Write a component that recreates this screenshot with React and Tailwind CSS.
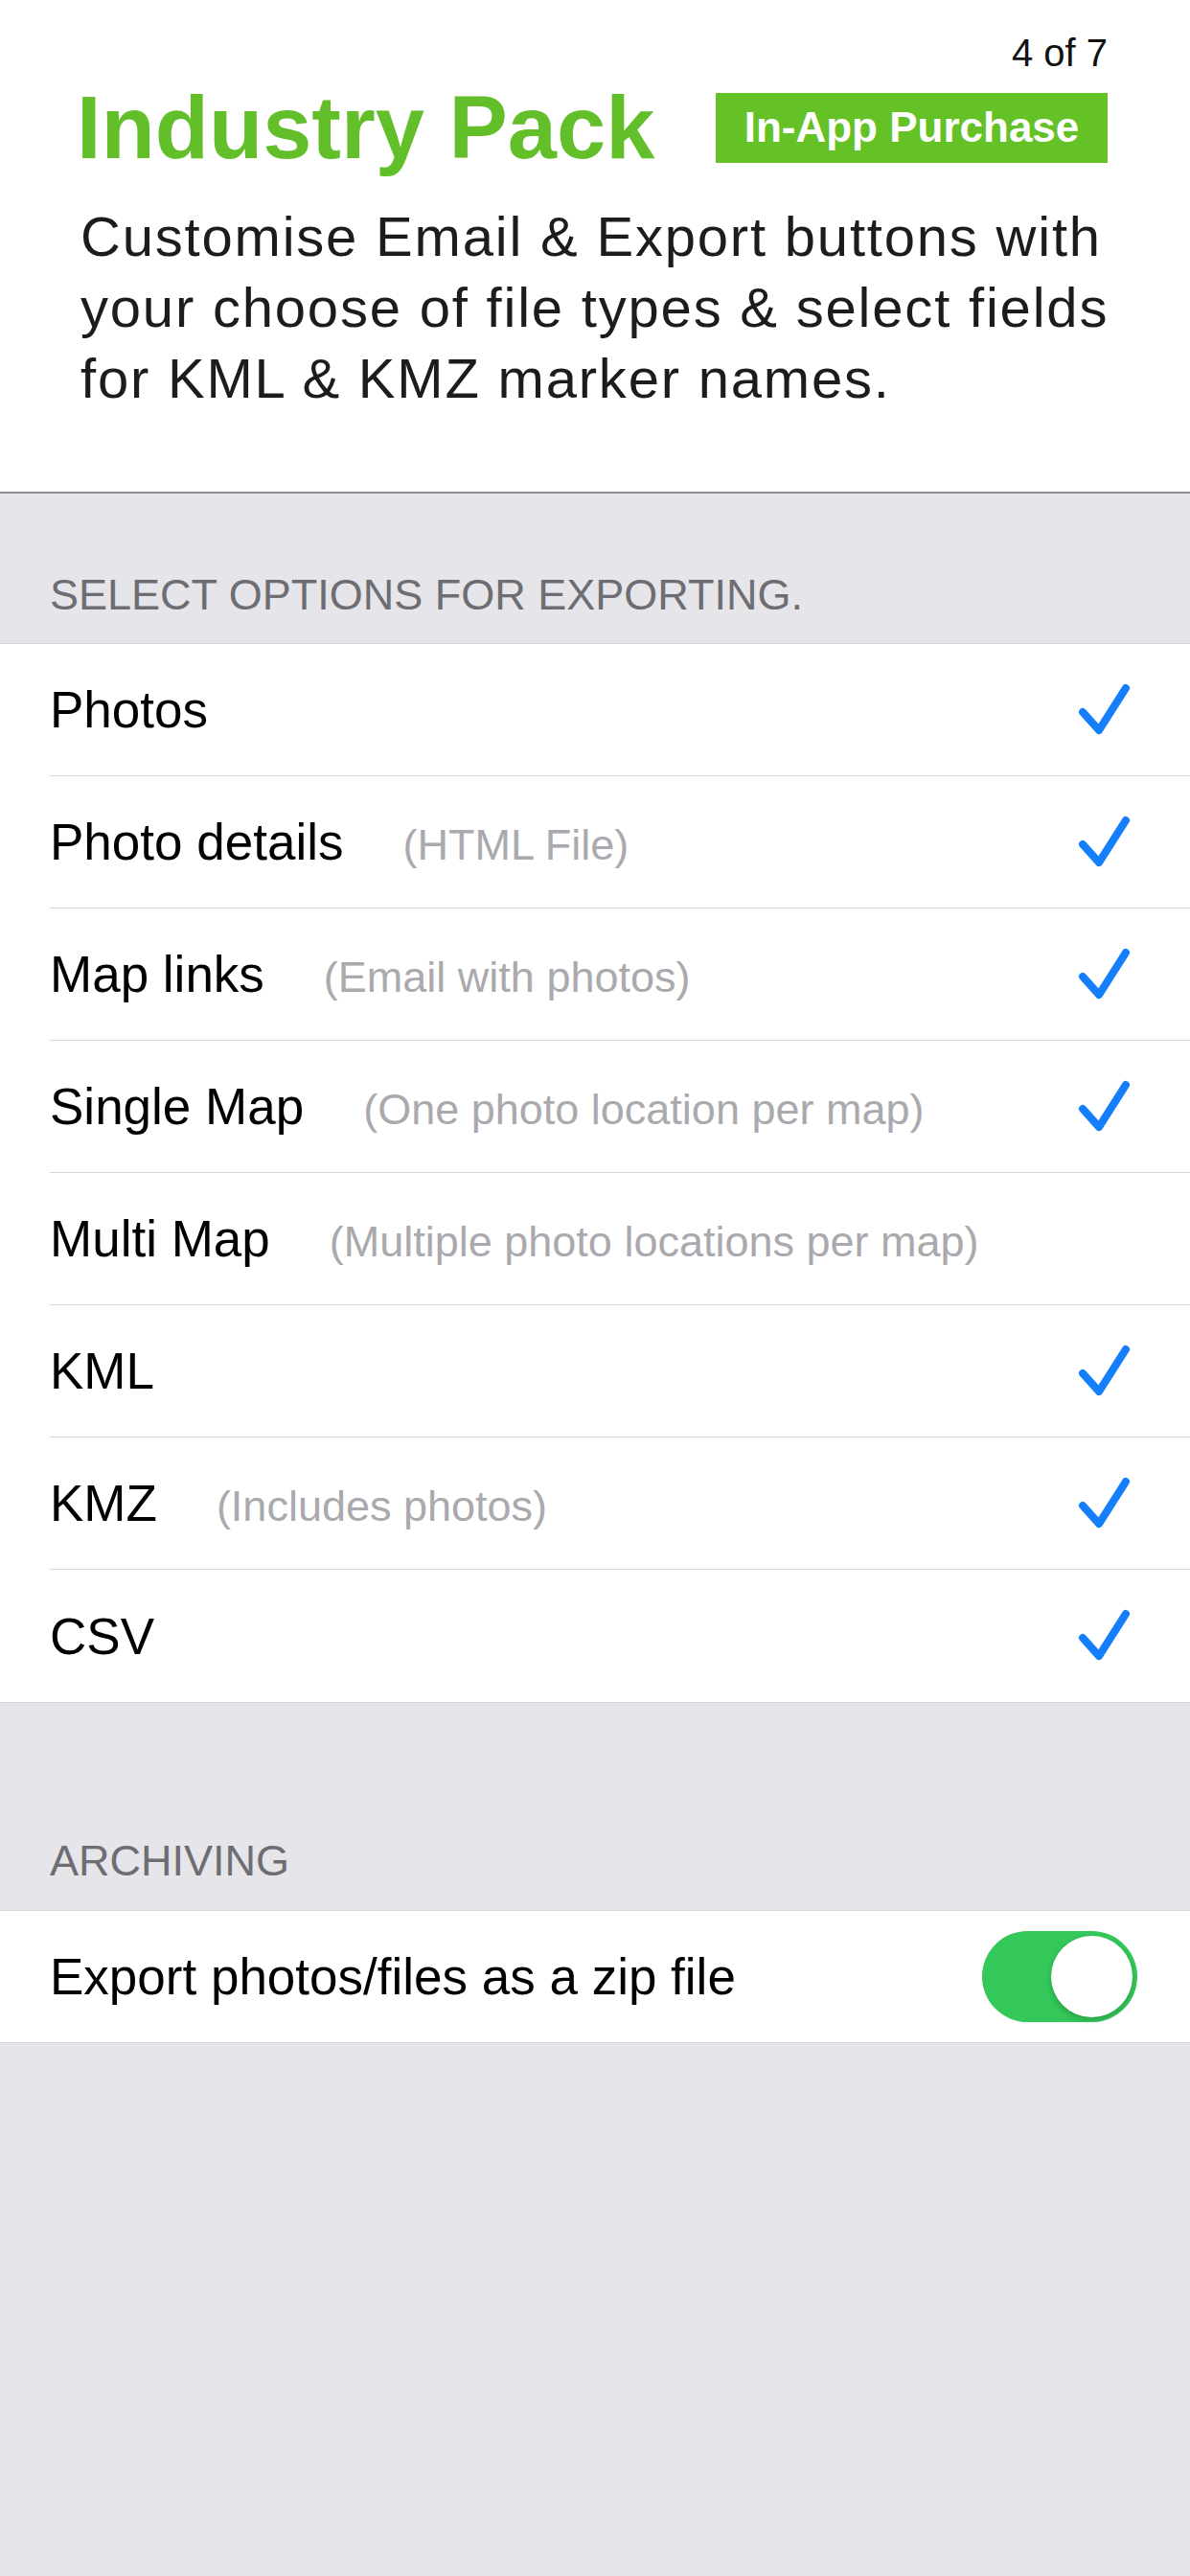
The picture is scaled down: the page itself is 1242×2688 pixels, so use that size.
const options = [
  { label: 'Photos', note: '', checked: true },
  { label: 'Photo details', note: '(HTML File)', checked: true },
  { label: 'Map links', note: '(Email with photos)', checked: true },
  { label: 'Single Map', note: '(One photo location per map)', checked: true },
  { label: 'Multi Map', note: '(Multiple photo locations per map)', checked: false },
  { label: 'KML', note: '', checked: true },
  { label: 'KMZ', note: '(Includes photos)', checked: true },
  { label: 'CSV', note: '', checked: true },
];

function Check() {
  return (
    <svg width="56" height="56" viewBox="0 0 56 56" fill="none">
      <polyline
        points="6,30 23,49 51,5"
        stroke="#157efb"
        strokeWidth="8"
        strokeLinecap="round"
        strokeLinejoin="round"
      />
    </svg>
  );
}

function App() {
  return (
    <div className="min-h-screen bg-[#e5e5ea] font-['Liberation_Sans',Arial,sans-serif]">
      {/* header card */}
      <div className="h-[515px] bg-white border-b-2 border-[#8c8c8e] px-[86px] pt-[35px]">
        <div className="text-right text-[40px] leading-none text-[#111]">4 of 7</div>
        <div className="mt-[12px] flex items-center justify-between">
          <h1 className="text-[92px] leading-none font-bold text-[#62bf2a] -ml-[6px]">Industry Pack</h1>
          <span className="h-[73px] w-[409px] bg-[#64c126] text-white font-bold text-[44px] leading-none flex items-center justify-center">
            In-App Purchase
          </span>
        </div>
        <p className="mt-[31px] -ml-[2px] whitespace-nowrap text-[58px] leading-[74px] tracking-[1.8px] text-[#1c1c1c]">
          Customise Email &amp; Export buttons with
          <br />
          your choose of file types &amp; select fields
          <br />
          for KML &amp; KMZ marker names.
        </p>
      </div>

      {/* export options */}
      <div className="pl-[52px] pt-[83px] pb-[28px] text-[45px] leading-none text-[#6d6d72]">
        SELECT OPTIONS FOR EXPORTING.
      </div>
      <div className="bg-white border-y border-[#d4d4d8]">
        {options.map((o, i) => (
          <div key={o.label} className="pl-[52px]">
            <div
              className={`h-[138px] flex items-center justify-between pr-[62px] ${
                i < options.length - 1 ? 'border-b border-[#d9d9dd]' : ''
              }`}
            >
              <div className="flex items-baseline">
                <span className="text-[53px] leading-none text-black">{o.label}</span>
                {o.note && (
                  <span className="ml-[62px] text-[45px] leading-none text-[#a9a9ae]">{o.note}</span>
                )}
              </div>
              {o.checked && <Check />}
            </div>
          </div>
        ))}
      </div>

      {/* archiving */}
      <div className="pl-[52px] pt-[142px] pb-[29px] text-[45px] leading-none text-[#6d6d72]">
        ARCHIVING
      </div>
      <div className="bg-white border-y border-[#d4d4d8] h-[139px] pl-[52px] pr-[55px] flex items-center justify-between">
        <span className="text-[53px] leading-none text-black">Export photos/files as a zip file</span>
        <div className="w-[162px] h-[95px] rounded-full bg-[#34c759] p-[5px] flex justify-end">
          <div className="w-[85px] h-[85px] rounded-full bg-white shadow-[0_3px_6px_rgba(0,0,0,0.2)]" />
        </div>
      </div>
    </div>
  );
}

export default App;
